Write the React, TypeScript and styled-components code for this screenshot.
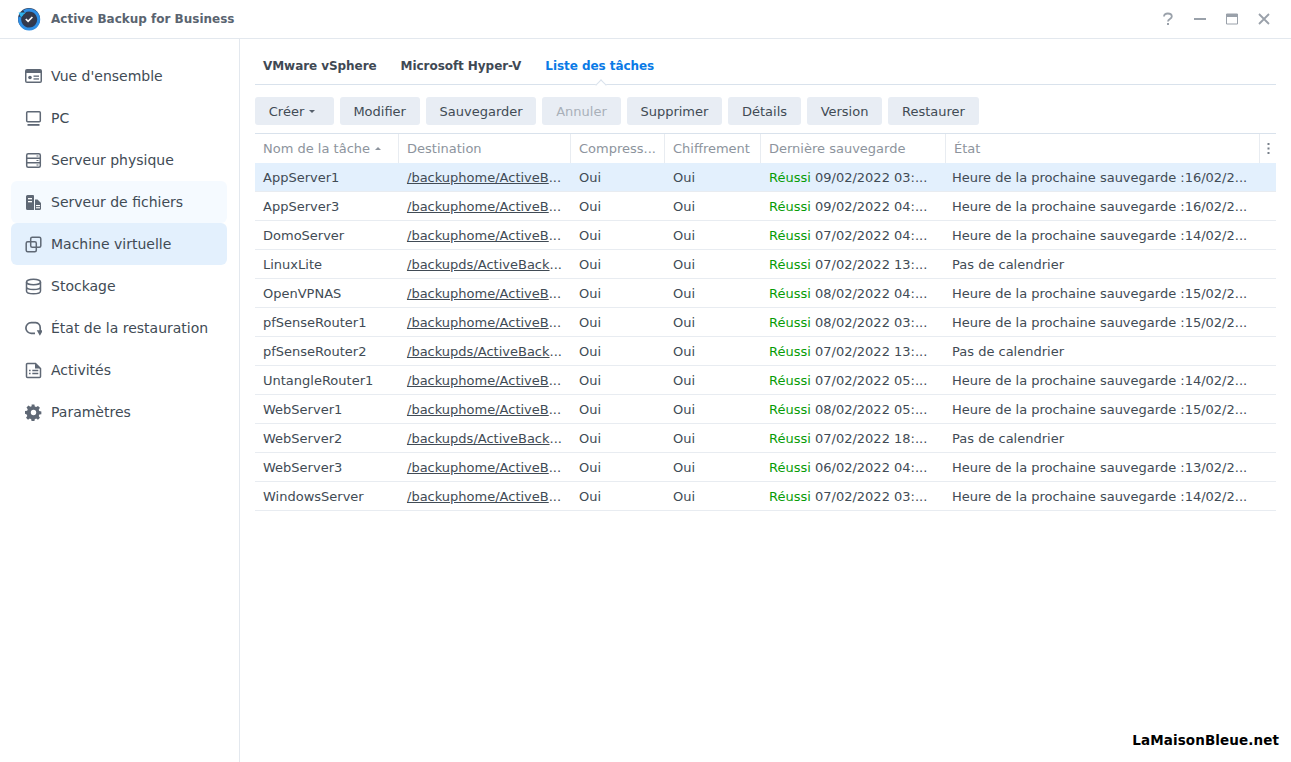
import React from 'react';
import styled, { createGlobalStyle } from 'styled-components';

const GlobalStyle = createGlobalStyle`
    html, body {
        margin: 0;
        padding: 0;
        height: 100%;
        background: #fff;
    }
    body {
        font-family: "DejaVu Sans", "Noto Sans", sans-serif;
        font-size: 13px;
        color: #414b55;
    }
`;

const columns = '144px 172px 94px 96px 185px 314px 1fr';

/**
 * TITLE BAR
 */

const TitleBar = styled.header`
    height: 38px;
    display: flex;
    align-items: center;
    padding: 0 21px 0 17px;
    border-bottom: 1px solid #e3e8ee;
`;

const AppName = styled.h1`
    margin: 0 0 0 10px;
    font-size: 12px;
    font-weight: 700;
    color: #5a6470;
    flex: 1;
`;

const WindowButtons = styled.div`
    display: flex;
    align-items: center;
    gap: 20px;
    color: #9aa1aa;
`;

function AppLogo() {
    return (
        <svg width="24" height="24" viewBox="0 0 24 24">
            <circle cx="12" cy="12" r="11" fill="#2d3a55" />
            <path d="M3 10a9.500 9.500 0 1 0 4-5.500" fill="none" stroke="#2f8fe6" strokeWidth="3" />
            <path d="M1.500 5.500h7.500l-5 5z" fill="#2fb2ee" />
            <circle cx="12" cy="12" r="6.800" fill="#343a4d" />
            <path d="M8.800 12l2.300 2.300 4.300-4.300" fill="none" stroke="#fff" strokeWidth="1.700" />
        </svg>
    );
}

function WindowIcons() {
    return (
        <WindowButtons>
            <svg width="12" height="14" viewBox="0 0 12 14">
                <path d="M2 4.500C2 2.500 3.500 1.500 5.800 1.500S9.800 2.700 9.800 4.500C9.800 7 6 7 6 9.500" fill="none" stroke="currentColor" strokeWidth="1.800" />
                <rect x="5" y="11" width="2" height="2" fill="currentColor" />
            </svg>
            <svg width="12" height="12" viewBox="0 0 12 12">
                <rect x="0" y="5" width="12" height="2" fill="currentColor" />
            </svg>
            <svg width="12" height="12" viewBox="0 0 12 12">
                <path d="M0.500 1h11v10h-11z" fill="none" stroke="currentColor" />
                <rect x="0" y="1" width="12" height="3" fill="currentColor" />
            </svg>
            <svg width="12" height="12" viewBox="0 0 12 12">
                <path d="M1 1l10 10M11 1L1 11" fill="none" stroke="currentColor" strokeWidth="1.800" />
            </svg>
        </WindowButtons>
    );
}

/**
 * SIDEBAR
 */

const Body = styled.div`
    display: flex;
    height: 723px;
`;

const Sidebar = styled.nav`
    width: 240px;
    flex: none;
    box-sizing: border-box;
    padding: 16px 12px 0 11px;
    border-right: 1px solid #e3e8ee;
`;

const NavItem = styled.div<{ $state?: 'hover' | 'active' }>`
    height: 42px;
    display: flex;
    align-items: center;
    gap: 9px;
    padding-left: 14px;
    border-radius: 6px;
    font-size: 14px;
    color: #414b55;
    background: ${p => (p.$state === 'active' ? '#e3f0fd' : p.$state === 'hover' ? '#f5faff' : 'transparent')};
    svg {
        flex: none;
    }
`;

const iconColor = '#5f6875';

const navIcons: Record<string, React.ReactNode> = {
    overview: (
        <>
            <rect x="0" y="1" width="17" height="14" rx="2" fill={iconColor} />
            <rect x="1.500" y="5" width="14" height="8.500" fill="#fff" />
            <circle cx="5" cy="9.500" r="1.800" fill={iconColor} />
            <rect x="8.500" y="7.500" width="5.500" height="1.300" fill={iconColor} />
            <rect x="8.500" y="10.300" width="5.500" height="1.300" fill={iconColor} />
        </>
    ),
    pc: (
        <>
            <rect x="1.700" y="1.700" width="13.600" height="10" rx="1" fill="none" stroke={iconColor} strokeWidth="1.500" />
            <rect x="2.500" y="14" width="12" height="1.800" fill={iconColor} />
        </>
    ),
    server: (
        <>
            <rect x="1.700" y="1.700" width="13.600" height="13.600" rx="1.500" fill="none" stroke={iconColor} strokeWidth="1.500" />
            <path d="M2 6.300h13M2 10.700h13" stroke={iconColor} strokeWidth="1.500" />
            <path d="M11.500 4h2M11.500 8.500h2M11.500 13h2" stroke={iconColor} />
        </>
    ),
    files: (
        <>
            <path d="M2.500 1h5.500a1 1 0 0 1 1 1v14H2.500a1.500 1.500 0 0 1-1.500-1.500v-12A1.500 1.500 0 0 1 2.500 1z" fill={iconColor} />
            <rect x="3" y="4" width="4" height="1.300" fill="#fff" />
            <rect x="3" y="7" width="4" height="1.300" fill="#fff" />
            <path d="M10 5.500h2.500l3.500 3.500v5.500a1.500 1.500 0 0 1-1.500 1.500H10z" fill={iconColor} />
            <rect x="11" y="11" width="4" height="1.100" fill="#fff" />
            <rect x="11" y="13.200" width="4" height="1.100" fill="#fff" />
        </>
    ),
    vm: (
        <>
            <rect x="5.700" y="1.200" width="10.100" height="10.100" rx="1.500" fill="none" stroke={iconColor} strokeWidth="1.500" />
            <rect x="1.200" y="5.700" width="10.100" height="10.100" rx="1.500" fill="none" stroke={iconColor} strokeWidth="1.500" />
        </>
    ),
    storage: (
        <>
            <ellipse cx="8.500" cy="4" rx="7" ry="2.800" fill="none" stroke={iconColor} strokeWidth="1.500" />
            <path d="M1.500 4v9c0 1.600 3.100 2.800 7 2.800s7-1.200 7-2.800V4M1.500 8.700c0 1.600 3.100 2.800 7 2.800s7-1.200 7-2.800" fill="none" stroke={iconColor} strokeWidth="1.500" />
        </>
    ),
    restore: (
        <>
            <path d="M10 13.300H6.200a5.300 5.300 0 0 1 0-10.600h4.600a5 5 0 0 1 4.400 5V11" fill="none" stroke={iconColor} strokeWidth="1.700" />
            <path d="M11.800 10.300h6.200l-3.100 5.400z" fill={iconColor} />
        </>
    ),
    log: (
        <>
            <path d="M2.500 1.500h8l5 5v8a1 1 0 0 1-1 1h-12a1 1 0 0 1-1-1v-12a1 1 0 0 1 1-1z" fill="none" stroke={iconColor} strokeWidth="1.500" />
            <path d="M10 1.500v5h5.500z" fill={iconColor} />
            <path d="M4 8.500h1.600M7.300 8.500h6M4 11.500h1.600M7.300 11.500h6" stroke={iconColor} strokeWidth="1.400" />
        </>
    ),
    settings: (
        <>
            <path
                d="M7 .5h3l.4 2.200 1.500.6 1.900-1.300 2.100 2.100-1.300 1.900.6 1.500 2.200.4v3l-2.200.4-.6 1.500 1.300 1.900-2.100 2.100-1.900-1.300-1.500.6-.4 2.200H7l-.4-2.200-1.500-.6-1.900 1.300-2.100-2.100 1.300-1.900-.6-1.500L0 10.500v-3l2.300-.4.6-1.500L1.600 3.700l2.100-2.100 1.900 1.300 1.500-.6z"
                fill={iconColor}
                transform="scale(0.94)"
            />
            <circle cx="8.500" cy="8.500" r="2.700" fill="#fff" />
        </>
    ),
};

const navItems: { key: string; label: string; state?: 'hover' | 'active' }[] = [
    { key: 'overview', label: "Vue d'ensemble" },
    { key: 'pc', label: 'PC' },
    { key: 'server', label: 'Serveur physique' },
    { key: 'files', label: 'Serveur de fichiers', state: 'hover' },
    { key: 'vm', label: 'Machine virtuelle', state: 'active' },
    { key: 'storage', label: 'Stockage' },
    { key: 'restore', label: 'État de la restauration' },
    { key: 'log', label: 'Activités' },
    { key: 'settings', label: 'Paramètres' },
];

/**
 * TABS AND TOOLBAR
 */

const Main = styled.main`
    flex: 1;
    min-width: 0;
    padding: 0 15px;
`;

const Tabs = styled.div`
    position: relative;
    height: 46px;
    box-sizing: border-box;
    display: flex;
    align-items: center;
    gap: 24px;
    padding: 8px 0 0 8px;
    border-bottom: 1px solid #d9e2ec;
`;

const Tab = styled.span<{ $current?: boolean }>`
    font-size: 12px;
    font-weight: 700;
    letter-spacing: -0.06px;
    color: ${p => (p.$current ? '#0a7ae6' : '#3f4954')};
`;

const TabMark = styled.i`
    position: absolute;
    left: 341.5px;
    bottom: -4.5px;
    width: 7px;
    height: 7px;
    background: #fff;
    border-left: 1px solid #d9e2ec;
    border-top: 1px solid #d9e2ec;
    transform: rotate(45deg);
`;

const Toolbar = styled.div`
    display: flex;
    gap: 6px;
    padding: 12px 0 8px;
`;

const Button = styled.button`
    height: 28px;
    padding: 0 13.8px;
    border: 0;
    border-radius: 3px;
    background: #e8edf4;
    font-family: inherit;
    font-size: 13px;
    color: ${p => (p.disabled ? '#a9b0b9' : '#414b55')};
    display: flex;
    align-items: center;
    gap: 5px;
`;

const Caret = styled.i`
    width: 0;
    height: 0;
    margin-right: 4.5px;
    border: 3.5px solid transparent;
    border-top: 3.5px solid #56606c;
    border-bottom: 0;
`;

/**
 * TABLE
 */

const Table = styled.div`
    border-top: 1px solid #d9e2ec;
`;

const HeaderRow = styled.div`
    display: grid;
    grid-template-columns: ${columns};
    height: 29px;
    box-sizing: border-box;
`;

const HeaderCell = styled.div`
    display: flex;
    align-items: center;
    gap: 5px;
    padding: 0 8px;
    box-sizing: border-box;
    border-right: 1px solid #e8ecf1;
    color: #8d949d;
    white-space: nowrap;
    overflow: hidden;
    &:last-child {
        border-right: 0;
        padding: 0;
        justify-content: center;
    }
`;

const SortMark = styled.i`
    width: 0;
    height: 0;
    border: 3px solid transparent;
    border-bottom: 3px solid #8d949d;
    border-top: 0;
`;

const Row = styled.div<{ $selected?: boolean }>`
    display: grid;
    grid-template-columns: ${columns};
    height: 29px;
    box-sizing: border-box;
    align-items: center;
    border-bottom: 1px solid #e8ecf1;
    background: ${p => (p.$selected ? '#e3f0fd' : '#fff')};
`;

const Cell = styled.div`
    padding: 0 8px;
    white-space: nowrap;
`;

const WideCell = styled(Cell)`
    grid-column: span 2;
    padding: 0 0 0 6px;
`;

const DestLink = styled.span`
    text-decoration: underline;
`;

const Success = styled.span`
    color: #079c07;
`;

const Watermark = styled.div`
    position: absolute;
    right: 12px;
    bottom: 14px;
    font-size: 13.5px;
    font-weight: 700;
    letter-spacing: 0.1px;
    color: #000;
`;

const nextRun = 'Heure de la prochaine sauvegarde :';
const home = '/backuphome/ActiveB';
const ds = '/backupds/ActiveBack';

const rows = [
    ['AppServer1', home, '09/02/2022 03:...', nextRun + '16/02/2...'],
    ['AppServer3', home, '09/02/2022 04:...', nextRun + '16/02/2...'],
    ['DomoServer', home, '07/02/2022 04:...', nextRun + '14/02/2...'],
    ['LinuxLite', ds, '07/02/2022 13:...', 'Pas de calendrier'],
    ['OpenVPNAS', home, '08/02/2022 04:...', nextRun + '15/02/2...'],
    ['pfSenseRouter1', home, '08/02/2022 03:...', nextRun + '15/02/2...'],
    ['pfSenseRouter2', ds, '07/02/2022 13:...', 'Pas de calendrier'],
    ['UntangleRouter1', home, '07/02/2022 05:...', nextRun + '14/02/2...'],
    ['WebServer1', home, '08/02/2022 05:...', nextRun + '15/02/2...'],
    ['WebServer2', ds, '07/02/2022 18:...', 'Pas de calendrier'],
    ['WebServer3', home, '06/02/2022 04:...', nextRun + '13/02/2...'],
    ['WindowsServer', home, '07/02/2022 03:...', nextRun + '14/02/2...'],
];

const toolbarLabels = ['Modifier', 'Sauvegarder', 'Annuler', 'Supprimer', 'Détails', 'Version', 'Restaurer'];

export default function App() {
    return (
        <>
            <GlobalStyle />
            <TitleBar>
                <AppLogo />
                <AppName>Active Backup for Business</AppName>
                <WindowIcons />
            </TitleBar>
            <Body>
                <Sidebar>
                    {navItems.map(item => (
                        <NavItem key={item.key} $state={item.state}>
                            <svg width="17" height="17" viewBox="0 0 17 17">{navIcons[item.key]}</svg>
                            {item.label}
                        </NavItem>
                    ))}
                </Sidebar>
                <Main>
                    <Tabs>
                        <Tab>VMware vSphere</Tab>
                        <Tab>Microsoft Hyper-V</Tab>
                        <Tab $current>Liste des tâches</Tab>
                        <TabMark />
                    </Tabs>
                    <Toolbar>
                        <Button>Créer <Caret /></Button>
                        {toolbarLabels.map(label => (
                            <Button key={label} disabled={label === 'Annuler'}>{label}</Button>
                        ))}
                    </Toolbar>
                    <Table>
                        <HeaderRow>
                            <HeaderCell>Nom de la tâche <SortMark /></HeaderCell>
                            <HeaderCell>Destination</HeaderCell>
                            <HeaderCell>Compress...</HeaderCell>
                            <HeaderCell>Chiffrement</HeaderCell>
                            <HeaderCell>Dernière sauvegarde</HeaderCell>
                            <HeaderCell>État</HeaderCell>
                            <HeaderCell>
                                <svg width="3" height="11" viewBox="0 0 3 11">
                                    <path d="M.5 0h2v2h-2zM.5 4.500h2v2h-2zM.5 9h2v2h-2z" fill="#777f89" />
                                </svg>
                            </HeaderCell>
                        </HeaderRow>
                        {rows.map((row, i) => (
                            <Row key={row[0]} $selected={i === 0}>
                                <Cell>{row[0]}</Cell>
                                <Cell><DestLink>{row[1]}</DestLink>...</Cell>
                                <Cell>Oui</Cell>
                                <Cell>Oui</Cell>
                                <Cell><Success>Réussi</Success> {row[2]}</Cell>
                                <WideCell>{row[3]}</WideCell>
                            </Row>
                        ))}
                    </Table>
                </Main>
            </Body>
            <Watermark>LaMaisonBleue.net</Watermark>
        </>
    );
}
